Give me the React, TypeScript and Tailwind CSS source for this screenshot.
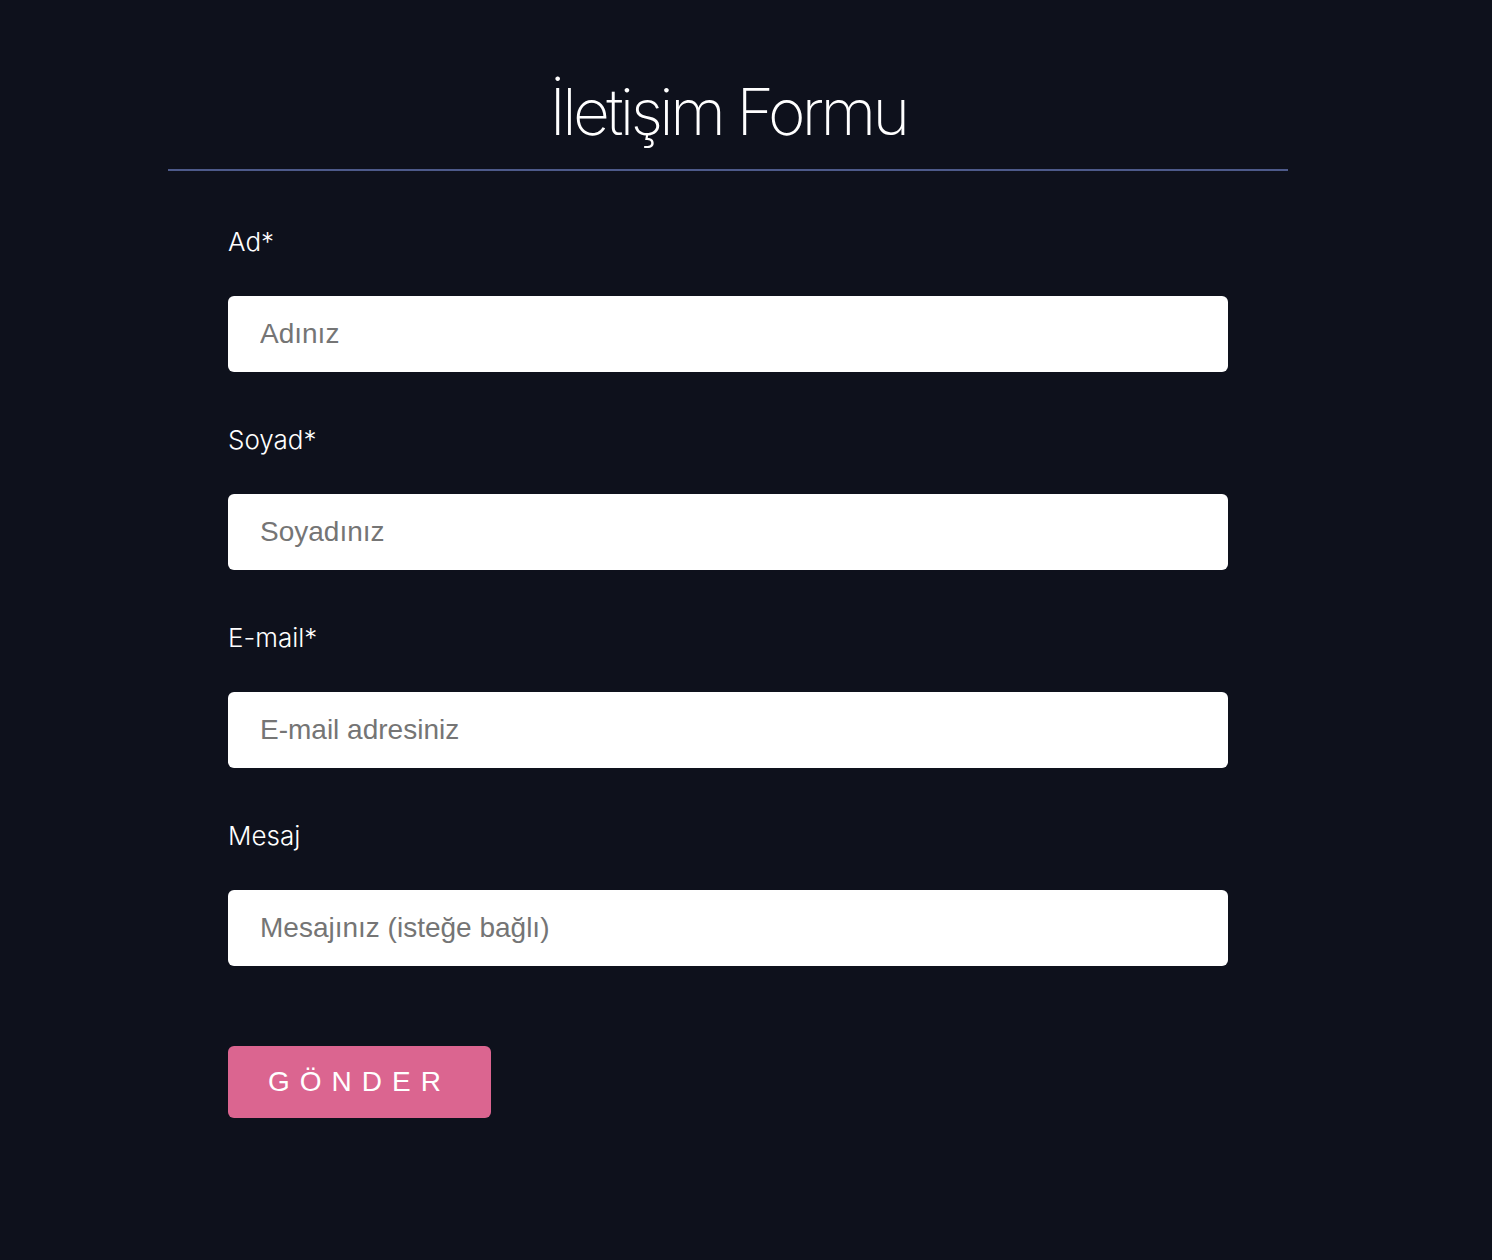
const fields = [
  { label: "Ad*", placeholder: "Adınız", type: "text" },
  { label: "Soyad*", placeholder: "Soyadınız", type: "text" },
  { label: "E-mail*", placeholder: "E-mail adresiniz", type: "email" },
  { label: "Mesaj", placeholder: "Mesajınız (isteğe bağlı)", type: "text" },
];

export default function App() {
  return (
    <div className="min-h-[1260px] bg-[#0e111c] pt-[73px] font-['Inter',sans-serif]">
      <div className="ml-[168px] w-[1120px]">
        <h1 className="border-b-2 border-[#4d5a8a] pb-[19px] text-center text-[64px] leading-[77px] font-extralight tracking-[-3.6px] text-white">
          İletişim Formu
        </h1>

        <form className="mt-[55px] flex flex-col px-[60px]">
          {fields.map((f) => (
            <div key={f.label} className="mb-[52px] flex flex-col gap-[38px]">
              <label className="text-[26px] leading-[32px] font-light text-white">
                {f.label}
              </label>
              <input
                type={f.type}
                placeholder={f.placeholder}
                className="h-[76px] w-[1000px] rounded-md bg-white px-8 font-['Liberation_Sans',Arial,sans-serif] text-[28px] text-gray-800 outline-none placeholder:text-[#757575]"
              />
            </div>
          ))}

          <button
            type="button"
            className="mt-[28px] h-[72px] w-[263px] rounded-md bg-[#db6590] font-['Liberation_Sans',Arial,sans-serif] text-[28px] tracking-[10px] text-white"
          >
            GÖNDER
          </button>
        </form>
      </div>
    </div>
  );
}
